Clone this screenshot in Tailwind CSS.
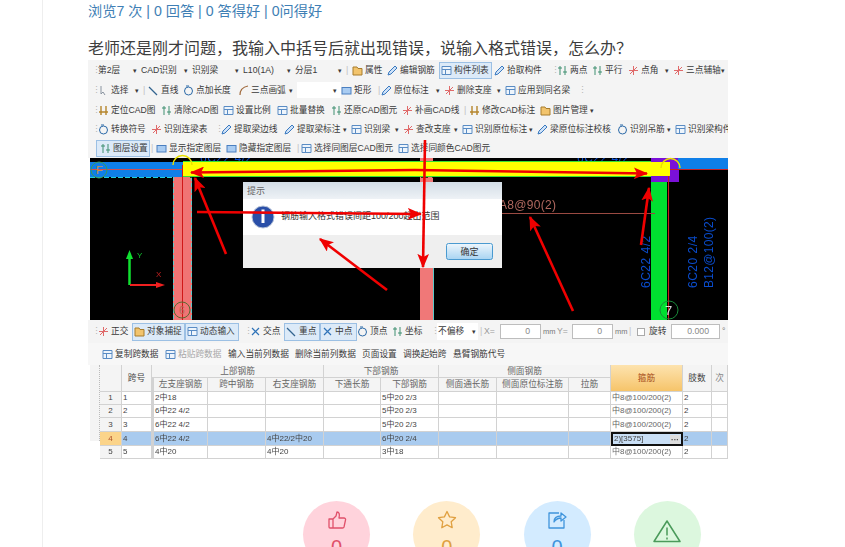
<!DOCTYPE html>
<html lang="zh">
<head>
<meta charset="utf-8">
<script src="https://cdn.jsdelivr.net/npm/@tailwindcss/browser@4"></script>
</head>
<body class="bg-white overflow-hidden h-[547px] font-['Liberation_Sans','Noto_Sans_CJK_SC',sans-serif]">
<svg class="hidden">
<symbol id="bars" viewBox="0 0 11 11"><path d="M3 1v9M8 1v9M1 3h4M6 7h4" stroke="#3f8f70" fill="none"/></symbol>
<symbol id="barso" viewBox="0 0 11 11"><path d="M3 1v9M8 1v9M1 7h9" stroke="#b5852c" fill="none" stroke-width="1.4"/></symbol>
<symbol id="box" viewBox="0 0 11 11"><rect x="1" y="2.5" width="9" height="6.5" fill="#a9ccf2" stroke="#4a7fc0"/></symbol>
<symbol id="pen" viewBox="0 0 11 11"><path d="M1 10l1-3 6-6 2 2-6 6z" fill="#cfe2f8" stroke="#3a7ac0"/></symbol>
<symbol id="line" viewBox="0 0 11 11"><path d="M1 2l8 8" stroke="#33648f" stroke-width="1.3"/></symbol>
<symbol id="tbl" viewBox="0 0 11 11"><path d="M1 1.500h9v8H1zM1 4.500h9M4.500 4.500v5" fill="#eef5fc" stroke="#5a8cc4"/></symbol>
<symbol id="x" viewBox="0 0 11 11"><path d="M2 2l7 7M9 2l-7 7" stroke="#2f73b8" stroke-width="1.2"/></symbol>
<symbol id="red" viewBox="0 0 11 11"><path d="M1 5.500h9M5.500 1v9M2 9l7-7" stroke="#e06a6a" fill="none"/></symbol>
<symbol id="fold" viewBox="0 0 11 11"><path d="M1 2h4l1 1.500h4V10H1z" fill="#f2c46d" stroke="#a87c2c"/></symbol>
<symbol id="cur" viewBox="0 0 11 11"><path d="M3 1v8l2-2 2 3" stroke="#8a94a0" fill="none"/></symbol>
<symbol id="arc" viewBox="0 0 11 11"><path d="M2 10C2 5 5 2 10 1" stroke="#a06a3c" fill="none" stroke-width="1.2"/></symbol>
<symbol id="circ" viewBox="0 0 11 11"><circle cx="5.500" cy="6" r="4" fill="none" stroke="#2c6aa8"/><path d="M3 1h3" stroke="#2c6aa8"/></symbol>
</svg>

<div class="ml-[42px] border-l border-[#eeeeee] pl-[45px] h-[547px]">
  <p class="h-[22px] leading-[22px] text-[14.200px] text-[#3f7fb5] whitespace-nowrap">浏览7 次 | 0 回答 | 0 答得好 | 0问得好</p>
  <p class="mt-4 h-[22px] leading-[22px] text-[16px] text-[#3d3d3d] whitespace-nowrap font-['Liberation_Sans','Noto_Sans_CJK_TC',sans-serif]">老师还是刚才问题，我输入中括号后就出现错误，说输入格式错误，怎么办？</p>

  <div class="relative w-[640px] h-[403px] overflow-hidden blur-[0.4px] text-[8.7px] text-[#3a3a3a] leading-none">
    <div class="bg-[#f4f4f4] pl-[4px] [&>div]:flex [&>div]:items-center [&_span]:flex [&_span]:items-center [&_span]:shrink-0 [&_span]:whitespace-nowrap [&_span]:h-full [&_svg]:w-[11px] [&_svg]:h-[11px] [&_svg]:mr-[2px] [&_svg]:shrink-0 [&_b]:ml-auto [&_b]:mr-[4px] [&_b]:text-[7px] [&_b]:font-normal [&_em]:not-italic [&_em]:text-[#b5b5b5] [&_em]:w-[6px] [&_em]:shrink-0">
      <div class="h-[20px]">
        <em>⋮</em>
        <span class="w-[43px]">第2层<b>▾</b></span><span class="w-[51px]">CAD识别<b>▾</b></span><span class="w-[51px]">识别梁<b>▾</b></span><span class="w-[52px]">L10(1A)<b>▾</b></span><span class="w-[51px]">分层1<b>▾</b></span>
        <span class="w-[6px] text-[#c0c0c0]">|</span>
        <span class="w-[35px]"><svg><use href="#fold"/></svg>属性</span>
        <span class="w-[52px]"><svg><use href="#pen"/></svg>编辑钢筋</span>
        <span class="w-[53px] !h-[17px] bg-[#dceaf8] border border-[#9cc0e4] pl-[1px]"><svg><use href="#tbl"/></svg>构件列表</span>
        <span class="w-[2px]"></span>
        <span class="w-[57px]"><svg><use href="#pen"/></svg>拾取构件</span>
        <em>⋮</em>
        <span class="w-[35px]"><svg><use href="#bars"/></svg>两点</span>
        <span class="w-[36px]"><svg><use href="#bars"/></svg>平行</span>
        <span class="w-[45px]"><svg><use href="#red"/></svg>点角<b>▾</b></span>
        <span class="w-[56px]"><svg><use href="#red"/></svg>三点辅轴<b>▾</b></span>
      </div>
      <div class="h-[20px]">
        <em>⋮</em>
        <span class="w-[45px]"><svg><use href="#cur"/></svg>选择<b>▾</b></span>
        <span class="w-[5px] text-[#c0c0c0]">|</span>
        <span class="w-[35px]"><svg><use href="#line"/></svg>直线</span>
        <span class="w-[55px]"><svg><use href="#circ"/></svg>点加长度</span>
        <span class="w-[59px]"><svg><use href="#arc"/></svg>三点画弧<b>▾</b></span>
        <span class="w-[44px] !h-[16px] bg-white"><b>▾</b></span>
        <span class="w-[37px]"><svg><use href="#box"/></svg>矩形</span>
        <span class="w-[3px] text-[#c0c0c0]">|</span>
        <span class="w-[63px]"><svg><use href="#pen"/></svg>原位标注<b>▾</b></span>
        <span class="w-[61px]"><svg><use href="#red"/></svg>删除支座<b>▾</b></span>
        <span class="w-[73px]"><svg><use href="#tbl"/></svg>应用到同名梁</span>
        <em>⋮</em>
      </div>
      <div class="h-[20px]">
        <em>⋮</em>
        <span class="w-[63px]"><svg><use href="#barso"/></svg>定位CAD图</span>
        <span class="w-[62px]"><svg><use href="#bars"/></svg>清除CAD图</span>
        <span class="w-[54px]"><svg><use href="#tbl"/></svg>设置比例</span>
        <span class="w-[54px]"><svg><use href="#tbl"/></svg>批量替换</span>
        <span class="w-[71px]"><svg><use href="#bars"/></svg>还原CAD图元</span>
        <span class="w-[62px]"><svg><use href="#red"/></svg>补画CAD线</span>
        <span class="w-[5px] text-[#c0c0c0]">|</span>
        <span class="w-[71px]"><svg><use href="#barso"/></svg>修改CAD标注</span>
        <span class="w-[60px]"><svg><use href="#fold"/></svg>图片管理<b class="!ml-[2px]">▾</b></span>
      </div>
      <div class="h-[19px]">
        <em>⋮</em>
        <span class="w-[53px]"><svg><use href="#circ"/></svg>转换符号</span>
        <span class="w-[64px]"><svg><use href="#red"/></svg>识别连梁表</span>
        <em>⋮</em>
        <span class="w-[63px]"><svg><use href="#pen"/></svg>提取梁边线</span>
        <span class="w-[67px]"><svg><use href="#pen"/></svg>提取梁标注<b>▾</b></span>
        <span class="w-[52px]"><svg><use href="#tbl"/></svg>识别梁<b>▾</b></span>
        <span class="w-[59px]"><svg><use href="#red"/></svg>查改支座<b>▾</b></span>
        <span class="w-[75px]"><svg><use href="#tbl"/></svg>识别原位标注<b>▾</b></span>
        <span class="w-[80px]"><svg><use href="#pen"/></svg>梁原位标注校核</span>
        <span class="w-[58px]"><svg><use href="#circ"/></svg>识别吊筋<b>▾</b></span>
        <span class="w-[54px]"><svg><use href="#tbl"/></svg>识别梁构件</span>
      </div>
      <div class="h-[19px]">
        <span class="w-[4px]"></span>
        <span class="w-[54px] !h-[17px] bg-[#dceaf8] border border-[#9cc0e4] pl-[3px]"><svg><use href="#bars"/></svg>图层设置</span>
        <span class="w-[6px] text-[#c0c0c0] pl-[1px]">|</span>
        <span class="w-[70px]"><svg><use href="#box"/></svg>显示指定图层</span>
        <span class="w-[71px]"><svg><use href="#box"/></svg>隐藏指定图层</span>
        <span class="w-[4px] text-[#c0c0c0]">|</span>
        <span class="w-[97px]"><svg><use href="#tbl"/></svg>选择同图层CAD图元</span>
        <span class="w-[95px]"><svg><use href="#tbl"/></svg>选择同颜色CAD图元</span>
      </div>
    </div>

    <div class="h-[162px] ml-[2px] bg-black"></div>

    <div class="bg-[#f4f4f4] pl-[4px] h-[23px] flex items-center [&_span]:flex [&_span]:items-center [&_span]:shrink-0 [&_span]:whitespace-nowrap [&_svg]:w-[11px] [&_svg]:h-[11px] [&_svg]:mr-[2px] [&_svg]:shrink-0 [&_em]:not-italic [&_em]:text-[#b5b5b5] [&_em]:w-[6px] [&_em]:shrink-0">
      <em>⋮</em>
      <span class="w-[34px]"><svg><use href="#red"/></svg>正交</span>
      <span class="w-[53px] h-[18px] bg-[#dceaf8] border border-[#9cc0e4] pl-[1px]"><svg><use href="#fold"/></svg>对象捕捉</span>
      <span class="w-[54px] h-[18px] bg-[#dceaf8] border border-[#9cc0e4] pl-[1px]"><svg><use href="#tbl"/></svg>动态输入</span>
      <span class="w-[5px]"></span><em>⋮</em>
      <span class="w-[34px]"><svg><use href="#x"/></svg>交点</span>
      <span class="w-[36px] h-[18px] bg-[#dceaf8] border border-[#9cc0e4] pl-[1px]"><svg><use href="#line"/></svg>重点</span>
      <span class="w-[37px] h-[18px] bg-[#dceaf8] border border-[#9cc0e4] pl-[1px]"><svg><use href="#x"/></svg>中点</span>
      <span class="w-[35px]"><svg><use href="#circ"/></svg>顶点</span>
      <span class="w-[39px]"><svg><use href="#bars"/></svg>坐标</span>
      <em>⋮</em>
      <span class="w-[41px] h-[17px] bg-white pl-[1px]">不偏移<i class="ml-auto mr-[2px] text-[7px] not-italic">▾</i></span>
      <span class="w-[6px] text-[#c0c0c0] pl-[2px]">|</span>
      <span class="w-[16px] text-[#9a9a9a]">X=</span>
      <span class="w-[41px] h-[15px] bg-white border border-[#bdbdbd] justify-end pr-[10px] text-[#888888]">0</span>
      <span class="w-[16px] pl-[2px] text-[#777777] text-[7.500px]">mm</span>
      <span class="w-[15px] text-[#9a9a9a]">Y=</span>
      <span class="w-[41px] h-[15px] bg-white border border-[#bdbdbd] justify-end pr-[10px] text-[#888888]">0</span>
      <span class="w-[16px] pl-[2px] text-[#777777] text-[7.500px]">mm</span>
      <span class="w-[8px] text-[#c0c0c0]">|</span>
      <span class="w-[8px] h-[8px] bg-white border border-[#aaaaaa]"></span>
      <span class="w-[4px]"></span>
      <span class="w-[22px]">旋转</span>
      <span class="w-[49px] h-[15px] bg-white border border-[#bdbdbd] justify-end pr-[10px] text-[#888888]">0.000</span>
      <span class="pl-[2px] text-[#777777]">°</span>
    </div>

    <div class="bg-[#f7f7f7] h-[22px] pl-[14px] flex items-center [&_span]:flex [&_span]:items-center [&_span]:shrink-0 [&_span]:whitespace-nowrap [&_svg]:w-[11px] [&_svg]:h-[11px] [&_svg]:mr-[2px]">
      <span class="w-[63px]"><svg><use href="#tbl"/></svg>复制跨数据</span>
      <span class="w-[63px] text-[#a8a8a8]"><svg><use href="#tbl"/></svg>粘贴跨数据</span>
      <span class="w-[67px]">输入当前列数据</span>
      <span class="w-[67px]">删除当前列数据</span>
      <span class="w-[41px]">页面设置</span>
      <span class="w-[50px]">调换起始跨</span>
      <span>悬臂钢筋代号</span>
    </div>

    <div class="flex bg-white h-[76px]">
      <div class="w-[10px] shrink-0 ml-[2px] border-r border-dotted border-[#bbbbbb] bg-[#f4f4f4]"></div>
      <div class="grid grid-cols-[22px_30px_56px_58px_58px_57px_58px_58px_72px_42px_72px_29px_16px] grid-rows-[13px_14px_13px_13px_14px_14px_13px] text-[8px] text-[#444444] [&>*]:border-r [&>*]:border-b [&>*]:border-[#d2d2d2] [&>*]:flex [&>*]:items-center [&>*]:px-[1px] [&>*]:whitespace-nowrap [&>*]:overflow-hidden">
        <div class="row-span-2 bg-[#f4f4f4]"></div>
        <div class="row-span-2 bg-[#f4f4f4] justify-center text-[8.7px]">跨号</div>
        <div class="col-span-3 bg-[#f4f4f4] justify-center text-[8.7px] text-[#666666]">上部钢筋</div>
        <div class="col-span-2 bg-[#f4f4f4] justify-center text-[8.7px] text-[#666666]">下部钢筋</div>
        <div class="col-span-3 bg-[#f4f4f4] justify-center text-[8.7px] text-[#666666]">侧面钢筋</div>
        <div class="row-span-2 bg-gradient-to-b from-[#fde3ae] to-[#f6c469] justify-center text-[8.7px] text-[#a8501c]">箍筋</div>
        <div class="row-span-2 bg-[#f4f4f4] justify-center text-[8.7px]">肢数</div>
        <div class="row-span-2 bg-[#f4f4f4] justify-center text-[8.7px] text-[#888888]">次</div>
        <div class="bg-[#f4f4f4] justify-center text-[8.7px] text-[#666666] border-l-2 border-l-[#777777]">左支座钢筋</div>
        <div class="bg-[#f4f4f4] justify-center text-[8.7px] text-[#666666]">跨中钢筋</div>
        <div class="bg-[#f4f4f4] justify-center text-[8.7px] text-[#666666]">右支座钢筋</div>
        <div class="bg-[#f4f4f4] justify-center text-[8.7px] text-[#666666]">下通长筋</div>
        <div class="bg-[#f4f4f4] justify-center text-[8.7px] text-[#666666]">下部钢筋</div>
        <div class="bg-[#f4f4f4] justify-center text-[8.7px] text-[#666666]">侧面通长筋</div>
        <div class="bg-[#f4f4f4] justify-center text-[8.7px] text-[#666666]">侧面原位标注筋</div>
        <div class="bg-[#f4f4f4] justify-center text-[8.7px] text-[#666666]">拉筋</div>

        <div class="bg-[#f4f4f4] justify-center">1</div><div>1</div><div class="border-l-2 border-l-[#777777]">2中18</div><div></div><div></div><div></div><div>5中20 2/3</div><div></div><div></div><div></div><div class="text-[#666666]">中8@100/200(2)</div><div>2</div><div></div>
        <div class="bg-[#f4f4f4] justify-center">2</div><div>2</div><div class="border-l-2 border-l-[#777777]">6中22 4/2</div><div></div><div></div><div></div><div>5中20 2/3</div><div></div><div></div><div></div><div class="text-[#666666]">中8@100/200(2)</div><div>2</div><div></div>
        <div class="bg-[#f4f4f4] justify-center">3</div><div>3</div><div class="border-l-2 border-l-[#777777]">6中22 4/2</div><div></div><div></div><div></div><div>5中20 2/3</div><div></div><div></div><div></div><div class="text-[#666666]">中8@100/200(2)</div><div>2</div><div></div>
        <div class="bg-[#fbd48a] justify-center text-[#b0502a]">4</div><div class="bg-[#a9cbef]">4</div><div class="bg-[#a9cbef] border-l-2 border-l-[#777777]">6中22 4/2</div><div class="bg-[#a9cbef]"></div><div class="bg-[#a9cbef]">4中22/2中20</div><div class="bg-[#a9cbef]"></div><div class="bg-[#a9cbef]">6中20 2/4</div><div class="bg-[#a9cbef]"></div><div class="bg-[#a9cbef]"></div><div class="bg-[#a9cbef]"></div><div class="bg-[#c9dff6] !border-2 !border-[#111111] justify-between">2)[3575]<i class="not-italic bg-[#dddddd] px-[1px] font-bold leading-[9px]">···</i></div><div class="bg-[#a9cbef]">2</div><div class="bg-[#a9cbef]"></div>
        <div class="bg-[#f4f4f4] justify-center">5</div><div>5</div><div class="border-l-2 border-l-[#777777]">4中20</div><div></div><div>4中20</div><div></div><div>3中18</div><div></div><div></div><div></div><div class="text-[#666666]">中8@100/200(2)</div><div>2</div><div></div>
      </div>
    </div>

    <svg class="absolute left-0 top-0 w-[640px] h-[403px]" viewBox="88 60 640 403">
      <defs><marker id="ah" viewBox="0 0 6 6" refX="5.500" refY="3" markerWidth="5.500" markerHeight="4.500" orient="auto" preserveAspectRatio="none"><path d="M0 0L6 3L0 6L1.300 3z" fill="#f00000"/></marker>
      <clipPath id="cad"><rect x="90" y="158" width="638" height="162"/></clipPath></defs>
      <!-- dimension text cut by the top edge of the drawing -->
      <g clip-path="url(#cad)">
        <text x="200" y="162" font-size="12" fill="#0a4ccc" letter-spacing=".5">6C22 4/2</text>
        <text x="577" y="162" font-size="12" fill="#0a4ccc" letter-spacing=".5">6C22 4/2</text>
      </g>
      <!-- beams and columns -->
      <rect x="90" y="162" width="93" height="15" fill="#0f7fe8"/>
      <path d="M90 177.500h93" stroke="#22d0d8" stroke-dasharray="5 2"/>
      <path d="M90 169.500h93" stroke="#d05050"/>
      <circle cx="99" cy="170" r="8" fill="none" stroke="#3a9a5a"/>
      <text x="96" y="174" font-size="11" fill="#d09040">F</text>
      <rect x="173" y="177" width="19" height="143" fill="#f07474"/>
      <path d="M173.500 177v143M191.500 177v143" stroke="#5cc8c8" stroke-dasharray="4 2"/>
      <path d="M182.500 165v155" stroke="#d01818"/>
      <circle cx="182" cy="310" r="8" fill="none" stroke="#5a6a30"/>
      <text x="179" y="314" font-size="10" fill="#b06a50">6</text>
      <rect x="420" y="158" width="13" height="162" fill="#f07878"/>
      <path d="M433.500 268v52" stroke="#5cc8c8"/>
      <rect x="651" y="158" width="28" height="24" fill="#7a10d8"/>
      <rect x="651" y="182" width="16" height="138" fill="#00e030"/>
      <rect x="678" y="158" width="50" height="11" fill="#0f7fe8"/>
      <path d="M668 169.500h60M668.500 170v150" stroke="#c82020"/>
      <rect x="183" y="161" width="468" height="16" fill="#38e030"/>
      <rect x="183" y="162" width="487" height="14" fill="#ffff00"/>
      <path d="M173 165a9.500 9.500 0 0 1 19 0M661 168a9.500 9.500 0 0 1 19 0" fill="none" stroke="#e8e000" stroke-width="1.500"/>
      <path d="M190 177.500h461" stroke="#000" stroke-dasharray="7 4" opacity=".7"/>
      <circle cx="669" cy="310" r="9" fill="none" stroke="#1a8a3a"/>
      <text x="665" y="315" font-size="13" fill="#dddddd">7</text>
      <!-- axes -->
      <path d="M129.500 285v-28" stroke="#10e030" stroke-width="2.500"/>
      <path d="M129.500 250l-3.500 9h7z" fill="#10e030"/>
      <path d="M130 285h30" stroke="#f02020" stroke-width="2"/>
      <path d="M165 285l-9-3v6z" fill="#f02020"/>
      <text x="137" y="258" font-size="8" fill="#10c030">Y</text>
      <text x="156" y="277" font-size="8" fill="#c02020">X</text>
      <!-- cad text -->
      <text x="499" y="209" font-size="12" fill="#b0685f" letter-spacing=".3">A8@90(2)</text>
      <path d="M502 213.500h153" stroke="#9a4a42"/>
      <text transform="translate(650 288) rotate(-90)" font-size="12" fill="#0a4ccc" letter-spacing=".5">6C22 4/2</text>
      <text transform="translate(697 288) rotate(-90)" font-size="12" fill="#0a4ccc" letter-spacing=".5">6C20 2/4</text>
      <text transform="translate(713 288) rotate(-90)" font-size="12" fill="#0a4ccc" letter-spacing=".3">B12@100(2)</text>
      <!-- dialog -->
      <defs><linearGradient id="tb" x1="0" y1="0" x2="0" y2="1"><stop offset="0" stop-color="#d3dde6"/><stop offset="1" stop-color="#eef2f6"/></linearGradient><linearGradient id="bt" x1="0" y1="0" x2="0" y2="1"><stop offset="0" stop-color="#eef6fc"/><stop offset="1" stop-color="#a8d4f2"/></linearGradient></defs>
      <rect x="243" y="182" width="259" height="17" fill="url(#tb)"/>
      <rect x="243" y="199" width="259" height="36" fill="#ffffff"/>
      <rect x="243" y="235" width="259" height="33" fill="#efefef"/>
      <text x="247" y="194" font-size="9" fill="#666666">提示</text>
      <circle cx="263" cy="217" r="11" fill="#2a4fa8" stroke="#b8c4d8"/>
      <rect x="261.500" y="214" width="3" height="9" fill="#fff"/><rect x="261.500" y="209.500" width="3" height="3" fill="#fff"/>
      <text x="281" y="219" font-size="9" fill="#333333">钢筋输入格式错误间距100/200超出范围</text>
      <rect x="446.500" y="243.500" width="46" height="16" rx="2" fill="url(#bt)" stroke="#4a9ad0"/>
      <text x="469.500" y="255" font-size="9" fill="#333333" text-anchor="middle">确定</text>
      <!-- red arrows -->
      <g stroke="#f00000" stroke-width="2.600" fill="none">
        <line x1="415" y1="170" x2="191" y2="172.500" marker-end="url(#ah)"/>
        <line x1="415" y1="170" x2="647" y2="173.500" marker-end="url(#ah)"/>
        <line x1="197" y1="212" x2="421" y2="214" marker-end="url(#ah)"/>
        <line x1="226" y1="254" x2="195" y2="178" marker-end="url(#ah)"/>
        <line x1="387" y1="290" x2="320" y2="239" marker-end="url(#ah)"/>
        <line x1="573" y1="311" x2="530" y2="217" marker-end="url(#ah)"/>
        <line x1="641" y1="245" x2="649" y2="188" marker-end="url(#ah)"/>
        <line x1="425" y1="140" x2="423" y2="267" marker-end="url(#ah)"/>
      </g>
    </svg>
  </div>

  <div class="mt-[38px] pl-[215px] flex gap-[43.300px]">
    <div class="w-[67px] h-[67px] rounded-full bg-[#ffd3dc] flex flex-col items-center pt-[9px] text-[#e0506a]">
      <svg class="w-[20px] h-[20px]" viewBox="0 0 20 20" fill="none" stroke="currentColor" stroke-width="1.300" stroke-linejoin="round"><path d="M2 9h4v9H3a1 1 0 0 1-1-1zM6 9l3-3 1-4c2 0 3 2 2 6h5c1 0 2 1 1.500 2l-1.500 7c-.2.700-1 1-1.500 1H6"/></svg>
      <span class="mt-[5px] text-[20px] leading-[24px]">0</span>
    </div>
    <div class="w-[67px] h-[67px] rounded-full bg-[#ffeccc] flex flex-col items-center pt-[9px] text-[#e0a040]">
      <svg class="w-[20px] h-[20px]" viewBox="0 0 20 20" fill="none" stroke="currentColor" stroke-width="1.300" stroke-linejoin="round"><path d="M10 1.500l2.600 5.400 5.900.8-4.300 4.100 1 5.900-5.200-2.800-5.200 2.800 1-5.900L1.500 7.700l5.900-.8z"/></svg>
      <span class="mt-[5px] text-[20px] leading-[24px]">0</span>
    </div>
    <div class="w-[67px] h-[67px] rounded-full bg-[#d3ebff] flex flex-col items-center pt-[9px] text-[#3f94dc]">
      <svg class="w-[20px] h-[20px]" viewBox="0 0 20 20" fill="none" stroke="currentColor" stroke-width="1.300" stroke-linejoin="round"><path d="M12 3H2v15h15v-8M7 12c0-4 3-6 7-6V3l5 4-5 4V8c-3 0-5 1-7 4z"/></svg>
      <span class="mt-[5px] text-[20px] leading-[24px]">0</span>
    </div>
    <div class="w-[67px] h-[67px] rounded-full bg-[#dcf7de] flex flex-col items-center pt-[18px] text-[#4a9a5a]">
      <svg class="w-[28px] h-[24px]" viewBox="0 0 28 24" fill="none" stroke="currentColor" stroke-width="1.500" stroke-linejoin="round"><path d="M14 2L27 22.500H1z"/><path d="M14 8.500v8M14 18.500v2"/></svg>
    </div>
  </div>
</div>
</body>
</html>
